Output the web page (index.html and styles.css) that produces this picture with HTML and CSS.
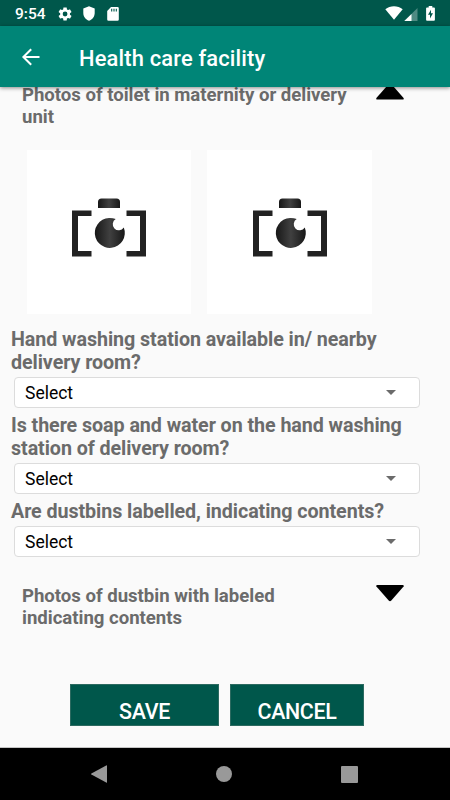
FILE: index.html
```html
<!DOCTYPE html>
<html lang="en">
<head>
  <meta charset="UTF-8" />
  <meta name="viewport" content="width=device-width, initial-scale=1.0" />
  <title>Health care facility</title>
  <link rel="stylesheet" href="styles.css">
</head>
<body>
  <div class="status-bar">
    <span class="time">9:54</span>
    <svg class="gear" width="16" height="16" viewBox="0 0 24 24"><path fill="#fff" d="M19.4 13c.04-.3.06-.6.06-1s-.02-.7-.07-1l2.1-1.6c.2-.15.24-.4.12-.6l-2-3.5c-.12-.2-.37-.3-.6-.2l-2.4 1c-.5-.4-1.05-.7-1.65-.95L14.6 2.6c-.04-.25-.25-.4-.5-.4h-4c-.25 0-.45.15-.5.4l-.35 2.55c-.6.25-1.15.57-1.65.95l-2.4-1c-.2-.1-.45 0-.6.2l-2 3.5c-.1.2-.06.45.12.6L4.8 11c-.05.3-.08.65-.08 1s.03.7.08 1l-2.1 1.6c-.18.15-.22.4-.12.6l2 3.5c.13.2.38.3.6.2l2.4-1c.5.4 1.05.7 1.65.95l.36 2.55c.05.25.25.4.5.4h4c.25 0 .46-.15.5-.4l.35-2.55c.6-.25 1.15-.57 1.65-.95l2.4 1c.22.1.47 0 .6-.2l2-3.5c.12-.2.07-.45-.12-.6zM12.1 15.6a3.6 3.6 0 1 1 0-7.2 3.6 3.6 0 0 1 0 7.2z"/></svg>
    <svg class="shield" width="12" height="15" viewBox="0 0 12 15"><path fill="#fff" d="M6 .3 11.7 2.6V7c0 3.6-2.3 6.5-5.7 7.7C2.6 13.5.3 10.6.3 7V2.6z"/></svg>
    <svg class="sd" width="12" height="14" viewBox="0 0 12 14"><path fill="#fff" d="M4 0h6.5A1.3 1.3 0 0 1 11.8 1.3v11.2a1.3 1.3 0 0 1-1.3 1.3h-9A1.3 1.3 0 0 1 .2 12.5V4z"/><path stroke="#00574b" stroke-width="1.1" d="M4.7 1.8v2.6M7 1.8v2.6M9.3 1.8v2.6"/></svg>
    <div class="signals">
      <svg class="wifi" width="18" height="14" viewBox="0 0 18 14"><path fill="#fff" d="M.3 3.2C5.2-.8 12.8-.8 17.7 3.2L9 13.7z"/></svg>
      <svg class="cell" width="14" height="13" viewBox="0 0 14 13"><path fill="#4f8a82" d="M13.5 0v13H.3z"/><path fill="#fff" d="M7.5 5.9V13H.3z"/></svg>
      <svg class="battery" width="9" height="15" viewBox="0 0 9 15"><path fill="#fff" d="M2.7 0h3.6v1.4H8q.9 0 .9.9v11.5q0 .9-.9.9H1q-.9 0-.9-.9V2.3q0-.9.9-.9h1.7z"/><path fill="#00574b" d="M5 3.7 2 8.7h2v3.8l3-5.2H5z"/></svg>
    </div>
  </div>

  <header class="app-bar">
    <svg width="20" height="18" viewBox="0 0 20 18"><path fill="none" stroke="#fff" stroke-width="2" d="M18.5 9H2.5M10.2 1.2 2.4 9l7.8 7.8"/></svg>
    <h1>Health care facility</h1>
  </header>

  <main class="form">
    <div class="section first">
      <h2>Photos of toilet in maternity or delivery unit</h2>
      <svg class="toggle" width="28" height="18" viewBox="0 0 28 18"><path d="M12.7 1.1q1.3-1.4 2.6 0L27.6 15q.6 1.600-1 1.600H1.400q-1.600 0-1-1.600z"/></svg>
    </div>

    <div class="photos">
      <div class="photo">
        <svg width="76" height="60" viewBox="0 0 76 60">
          <defs>
            <linearGradient id="ink">
              <stop offset="0" stop-color="#171717"/>
              <stop offset=".5" stop-color="#404040"/>
              <stop offset="1" stop-color="#171717"/>
            </linearGradient>
          </defs>
          <path fill="url(#ink)" d="M27 10V4q0-3.500 3.500-3.500h15Q49 .5 49 4v6z"/>
          <path fill="#222" d="M1 12.500h19.500V18H7v35h13.500v5.500H1zM75 12.500H55.500V18H69v35H55.500v5.500H75z"/>
          <path fill="url(#ink)" d="M44.700 21.100A15 15 0 1 0 52.800 29.500A6 6 0 1 1 44.700 21.100z"/>
        </svg>
      </div>
      <div class="photo">
        <svg width="76" height="60" viewBox="0 0 76 60">
          <path fill="url(#ink)" d="M27 10V4q0-3.500 3.500-3.500h15Q49 .5 49 4v6z"/>
          <path fill="#222" d="M1 12.500h19.500V18H7v35h13.500v5.500H1zM75 12.500H55.500V18H69v35H55.500v5.500H75z"/>
          <path fill="url(#ink)" d="M44.700 21.100A15 15 0 1 0 52.800 29.500A6 6 0 1 1 44.700 21.100z"/>
        </svg>
      </div>
    </div>

    <div class="question">
      <label>Hand washing station available in/ nearby delivery room?</label>
      <div class="select"><span>Select</span><i class="caret"></i></div>
    </div>
    <div class="question">
      <label>Is there soap and water on the hand washing station of delivery room?</label>
      <div class="select"><span>Select</span><i class="caret"></i></div>
    </div>
    <div class="question">
      <label>Are dustbins labelled, indicating contents?</label>
      <div class="select"><span>Select</span><i class="caret"></i></div>
    </div>

    <div class="section last">
      <h2>Photos of dustbin with labeled indicating contents</h2>
      <svg class="toggle" width="28" height="18" viewBox="0 0 28 18"><path d="M12.700 16.500q1.300 1.400 2.600 0L27.600 2.600q.6-1.600-1-1.600H1.400Q-.2 1 .4 2.600z"/></svg>
    </div>

    <div class="actions">
      <button class="save">SAVE</button>
      <button class="cancel">CANCEL</button>
    </div>
  </main>

  <nav class="nav-bar">
    <svg width="16" height="18" viewBox="0 0 16 18"><path fill="#999" d="M16 .8v16.400q0 .8-.8.400L.4 9.400q-.6-.4 0-.8L15.200.4q.8-.4.8.4z"/></svg>
    <span class="home"></span>
    <span class="recent"></span>
  </nav>
</body>
</html>
```
FILE: styles.css
```css
* {
  box-sizing: border-box;
}
body {
  margin: 0;
  width: 450px;
  height: 800px;
  display: flex;
  flex-direction: column;
  overflow: hidden;
  font-family: Roboto, sans-serif;
  background: #fafafa;
}
svg {
  display: block;
  flex: none;
}
.status-bar {
  flex: none;
  height: 26px;
  padding: 1px 15px 0;
  display: flex;
  align-items: center;
  background: #00574b;
  color: #fff;
}
.time {
  width: 42px;
  font-size: 15.5px;
  font-weight: 500;
}
.shield {
  margin-left: 10px;
}
.sd {
  margin-left: 12px;
}
.signals {
  display: flex;
  align-items: center;
  margin-left: auto;
}
.wifi {
  margin-top: -2px;
}
.cell {
  margin: 1px 8px 0 1px;
}
.app-bar {
  flex: none;
  height: 61px;
  padding: 0 21px;
  display: flex;
  align-items: center;
  gap: 38px;
  background: #008577;
  color: #fff;
  box-shadow: 0 1px 4px rgba(0,0,0,0.45);
  z-index: 1;
}
h1 {
  margin: 3px 0 0;
  font-size: 21.9px;
  font-weight: 500;
  letter-spacing: 0.16px;
}
.form {
  flex: 1;
  min-height: 0;
}
.section {
  display: flex;
  justify-content: space-between;
  padding: 0 46px 0 22px;
}
h2 {
  margin: 0;
  padding-top: 1px;
  width: 334px;
  font-size: 18.6px;
  line-height: 22px;
  font-weight: 700;
  letter-spacing: -0.02px;
  color: #6b6b6b;
}
.first {
  margin-top: -4px;
}
.last {
  margin-top: 22px;
}
.last h2 {
  width: 290px;
}
.photos {
  display: flex;
  gap: 16px;
  padding: 22px 27px 13px 26.5px;
}
.photo {
  width: 164.5px;
  height: 164px;
  padding: 48px 0 0 44.5px;
  background: #fff;
}
.question {
  padding: 0 30px 5.5px 11px;
}
label {
  display: block;
  padding-top: 1px;
  font-size: 19.7px;
  line-height: 23px;
  font-weight: 700;
  letter-spacing: -0.07px;
  color: #6b6b6b;
}
.select {
  display: flex;
  align-items: center;
  justify-content: space-between;
  height: 31px;
  margin: 2.5px 0 0 3px;
  padding: 1px 23px 0 10px;
  border: 1px solid #dcdcdc;
  border-radius: 4px;
  background: #fff;
  color: #000;
  font-size: 17.5px;
}
.select span {
  padding-top: 1px;
}
.caret {
  border: 5.5px solid transparent;
  border-top-color: #6b6b6b;
  border-bottom: 0;
}
.actions {
  display: flex;
  gap: 11px;
  margin-top: 55px;
  padding-left: 70px;
}
button {
  height: 42px;
  padding: 13px 0 0;
  border: 1px solid #2c6a60;
  background: #00574b;
  color: #fff;
  font-family: Roboto, sans-serif;
  font-size: 21.4px;
  font-weight: 500;
  line-height: 28px;
  letter-spacing: -0.35px;
}
.save {
  width: 149px;
}
.cancel {
  width: 134px;
}
.nav-bar {
  flex: none;
  height: 53px;
  padding: 0 92px 0 91px;
  display: flex;
  align-items: center;
  justify-content: space-between;
  border-top: 1px solid #c4c4c4;
  background: #000;
}
.home {
  width: 16px;
  height: 16px;
  border-radius: 50%;
  background: #999;
}
.recent {
  width: 17px;
  height: 17px;
  border-radius: 1px;
  background: #999;
}
```
